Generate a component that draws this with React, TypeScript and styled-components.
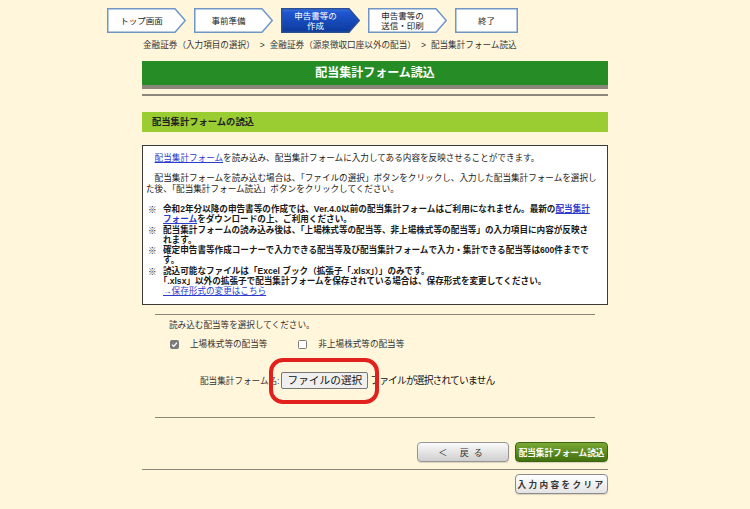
import React from "react";
import styled, { createGlobalStyle } from "styled-components";

const GlobalStyle = createGlobalStyle`
  html, body {
    margin: 0;
    padding: 0;
    background: #fff6dc;
  }
  body {
    font-family: "Liberation Sans", "Noto Sans CJK JP", sans-serif;
    color: #222;
  }
`;

const Page = styled.div`
  width: 750px;
  height: 509px;
  overflow: hidden;
  padding-top: 8px;
  box-sizing: border-box;
`;

/* ---------- header: steps + breadcrumb ---------- */

const Header = styled.div`
  width: 536px;
  margin: 0 auto;
`;

const StepRow = styled.div`
  display: flex;
  gap: 8px;
  height: 25px;
`;

const StepBox = styled.div<{ $w: number; $active?: boolean; $arrow?: boolean }>`
  position: relative;
  width: ${(p) => p.$w}px;
  height: 25px;
  padding-right: ${(p) => (p.$arrow ? 10 : 0)}px;
  box-sizing: border-box;
  display: flex;
  align-items: center;
  justify-content: center;
  font-size: 8.5px;
  line-height: 10px;
  text-align: center;
  color: ${(p) => (p.$active ? "#fff" : "#222")};

  svg {
    position: absolute;
    left: 0;
    top: 0;
  }
  span {
    position: relative;
  }
`;

const Breadcrumb = styled.div`
  margin-top: 6px;
  padding-left: 36px;
  font-size: 8.6px;
  line-height: 12px;
  color: #333;
  white-space: nowrap;
`;

const Sep = styled.span`
  margin: 0 5px;
`;

/* ---------- main column ---------- */

const Main = styled.div`
  width: 466px;
  margin: 10px auto 0;
`;

const TitleBar = styled.h1`
  margin: 0;
  height: 24px;
  background: #268c26;
  border-bottom: 4px solid #8b877a;
  color: #fff;
  font-size: 12px;
  font-weight: bold;
  line-height: 24px;
  text-align: center;
`;

const Rule = styled.div<{ $h?: number; $mt: number }>`
  height: ${(p) => p.$h ?? 1}px;
  margin-top: ${(p) => p.$mt}px;
  background: #8b877a;
`;

const SectionHead = styled.h2`
  margin: 16px 0 0;
  height: 20px;
  padding-left: 10px;
  background: #9acd32;
  color: #222;
  font-size: 9.3px;
  font-weight: bold;
  line-height: 20px;
`;

const InfoBox = styled.div`
  margin-top: 13px;
  padding: 7px 3px 8px;
  border: 1px solid #3a3a3a;
  background: #fff;
  font-size: 8.6px;
  line-height: 10.23px;
  color: #1a1a1a;
  white-space: nowrap;
`;

const Para = styled.p`
  margin: 0 0 10.23px;
  text-indent: 1em;
`;

const Note = styled.div`
  display: grid;
  grid-template-columns: 17px auto;
  font-weight: bold;
`;

const Mark = styled.span`
  padding-left: 2px;
  font-family: "Noto Sans CJK JP", sans-serif;
  font-weight: normal;
`;

const Bracket = styled.span`
  margin-left: -0.5em;
`;

const Link = styled.a<{ $plain?: boolean }>`
  color: #2b3bcc;
  text-decoration: underline;
  font-weight: ${(p) => (p.$plain ? "normal" : "inherit")};
`;

const SelectArea = styled.div`
  margin: 9px 13px 0;
  padding: 4px 0 28px 14px;
  border-top: 1px solid #8b877a;
  border-bottom: 1px solid #8b877a;
  font-size: 8.6px;
  line-height: 12px;
  color: #333;
`;

const CheckRow = styled.div`
  display: flex;
  align-items: center;
  margin-top: 7px;
  margin-left: 1px;
`;

const CheckItem = styled.label`
  display: flex;
  align-items: center;
  gap: 11px;
  margin-right: 31px;
`;

const Box = styled.span<{ $checked?: boolean }>`
  width: 9px;
  height: 9px;
  box-sizing: border-box;
  border: 1px solid #7a7a7a;
  border-radius: 1.5px;
  background: ${(p) => (p.$checked ? "#7b7b7b" : "#fff")};
  display: inline-flex;
  align-items: center;
  justify-content: center;
`;

const FileRow = styled.div`
  display: flex;
  align-items: center;
  margin: 22px 0 0 31px;
`;

const FileWrap = styled.span`
  position: relative;
  margin-left: 2px;
  display: inline-flex;
`;

const FileButton = styled.button`
  height: 17px;
  padding: 0 5px;
  border: 1px solid #767676;
  border-radius: 2px;
  background: #efefef;
  color: #111;
  font-family: inherit;
  font-size: 10.7px;
  line-height: 15px;
`;

const Highlight = styled.span`
  position: absolute;
  inset: -14px -11px -15px -12px;
  border: 4px solid #e2211c;
  border-radius: 14px;
  pointer-events: none;
`;

const FileStatus = styled.span`
  margin-left: 2px;
  font-size: 9.8px;
  letter-spacing: -0.9px;
  color: #111;
`;

const ButtonRow = styled.div<{ $mt: number }>`
  display: flex;
  justify-content: flex-end;
  gap: 6px;
  margin-top: ${(p) => p.$mt}px;
`;

const ActionButton = styled.button<{ $variant: "back" | "primary" | "clear" }>`
  height: 20px;
  width: ${(p) => (p.$variant === "back" ? 92 : 93)}px;
  padding: 0;
  border-radius: 4px;
  font-family: inherit;
  font-size: ${(p) => (p.$variant === "back" ? 9 : 8.6)}px;
  font-weight: ${(p) => (p.$variant === "back" ? "normal" : "bold")};
  letter-spacing: ${(p) =>
    p.$variant === "back" ? "5px" : p.$variant === "clear" ? "2.4px" : "0"};
  border: 1px solid
    ${(p) =>
      p.$variant === "primary" ? "#3d6610" : p.$variant === "back" ? "#959595" : "#8c8c8c"};
  color: ${(p) => (p.$variant === "primary" ? "#fff" : "#333")};
  background: ${(p) =>
    p.$variant === "primary"
      ? "linear-gradient(#7aa935, #41700f)"
      : p.$variant === "back"
      ? "linear-gradient(#fafafa, #cfcfcf)"
      : "linear-gradient(#ffffff, #e4e4e4)"};
  box-shadow: 0 1px 1px rgba(0, 0, 0, 0.15);
`;

/* ---------- step shape ---------- */

type StepProps = { w: number; lines: string[]; active?: boolean; arrow?: boolean };

const Step = ({ w, lines, active, arrow = true }: StepProps) => {
  const h = 25;
  const pts = arrow
    ? `0.75,0.75 ${w - 11},0.75 ${w - 0.75},${h / 2} ${w - 11},${h - 0.75} 0.75,${h - 0.75}`
    : `0.75,0.75 ${w - 0.75},0.75 ${w - 0.75},${h - 0.75} 0.75,${h - 0.75}`;
  return (
    <StepBox $w={w} $active={active} $arrow={arrow}>
      <svg width={w} height={h} viewBox={`0 0 ${w} ${h}`}>
        <defs>
          <linearGradient id="stepActive" x1="0" y1="0" x2="0" y2="1">
            <stop offset="0" stopColor="#3a74e6" />
            <stop offset="0.15" stopColor="#1f56d0" />
            <stop offset="1" stopColor="#0c3a9c" />
          </linearGradient>
        </defs>
        <polygon
          points={pts}
          fill={active ? "url(#stepActive)" : "#fff"}
          stroke={active ? "#2c4f94" : "#7096c6"}
          strokeWidth={1.5}
        />
      </svg>
      <span>
        {lines.map((l, i) => (
          <React.Fragment key={i}>
            {i > 0 && <br />}
            {l}
          </React.Fragment>
        ))}
      </span>
    </StepBox>
  );
};

const Check = () => (
  <svg width="7" height="7" viewBox="0 0 7 7">
    <path d="M1 3.6 L2.8 5.3 L6 1.6" fill="none" stroke="#fff" strokeWidth="1.3" />
  </svg>
);

export default function App() {
  return (
    <Page>
      <GlobalStyle />
      <Header>
        <StepRow>
          <Step w={79} lines={["トップ画面"]} />
          <Step w={79} lines={["事前準備"]} />
          <Step w={79} lines={["申告書等の", "作成"]} active />
          <Step w={79} lines={["申告書等の", "送信・印刷"]} />
          <Step w={63} lines={["終了"]} arrow={false} />
        </StepRow>
        <Breadcrumb>
          金融証券（入力項目の選択）<Sep>&gt;</Sep>金融証券（源泉徴収口座以外の配当）
          <Sep>&gt;</Sep>配当集計フォーム読込
        </Breadcrumb>
      </Header>

      <Main>
        <TitleBar>配当集計フォーム読込</TitleBar>
        <Rule $h={2} $mt={5} />
        <SectionHead>配当集計フォームの読込</SectionHead>

        <InfoBox>
          <Para>
            <Link $plain>配当集計フォーム</Link>
            を読み込み、配当集計フォームに入力してある内容を反映させることができます。
          </Para>
          <Para>
            配当集計フォームを読み込む場合は、「ファイルの選択」ボタンをクリックし、入力した配当集計フォームを選択し
            <br />
            た後、「配当集計フォーム読込」ボタンをクリックしてください。
          </Para>
          <Note>
            <Mark>※</Mark>
            <span>
              令和2年分以降の申告書等の作成では、Ver.4.0以前の配当集計フォームはご利用になれません。最新の
              <Link>配当集計</Link>
              <br />
              <Link>フォーム</Link>をダウンロードの上、ご利用ください。
            </span>
          </Note>
          <Note>
            <Mark>※</Mark>
            <span>
              配当集計フォームの読み込み後は、「上場株式等の配当等、非上場株式等の配当等」の入力項目に内容が反映さ
              <br />
              れます。
            </span>
          </Note>
          <Note>
            <Mark>※</Mark>
            <span>
              確定申告書等作成コーナーで入力できる配当等及び配当集計フォームで入力・集計できる配当等は600件までで
              <br />
              す。
            </span>
          </Note>
          <Note>
            <Mark>※</Mark>
            <span>
              読込可能なファイルは「Excel ブック（拡張子「.xlsx」）」のみです。
              <br />
              <Bracket>「</Bracket>.xlsx」以外の拡張子で配当集計フォームを保存されている場合は、保存形式を変更してください。
              <br />
              <Link $plain>→保存形式の変更はこちら</Link>
            </span>
          </Note>
        </InfoBox>

        <SelectArea>
          <div>読み込む配当等を選択してください。</div>
          <CheckRow>
            <CheckItem>
              <Box $checked>
                <Check />
              </Box>
              上場株式等の配当等
            </CheckItem>
            <CheckItem>
              <Box />
              非上場株式等の配当等
            </CheckItem>
          </CheckRow>
          <FileRow>
            配当集計フォーム名:
            <FileWrap>
              <FileButton type="button">ファイルの選択</FileButton>
              <Highlight />
            </FileWrap>
            <FileStatus>ファイルが選択されていません</FileStatus>
          </FileRow>
        </SelectArea>

        <ButtonRow $mt={24}>
          <ActionButton $variant="back" type="button">
            ＜ 戻る
          </ActionButton>
          <ActionButton $variant="primary" type="button">
            配当集計フォーム読込
          </ActionButton>
        </ButtonRow>
        <Rule $mt={7} />
        <ButtonRow $mt={4}>
          <ActionButton $variant="clear" type="button">
            入力内容をクリア
          </ActionButton>
        </ButtonRow>
      </Main>
    </Page>
  );
}
